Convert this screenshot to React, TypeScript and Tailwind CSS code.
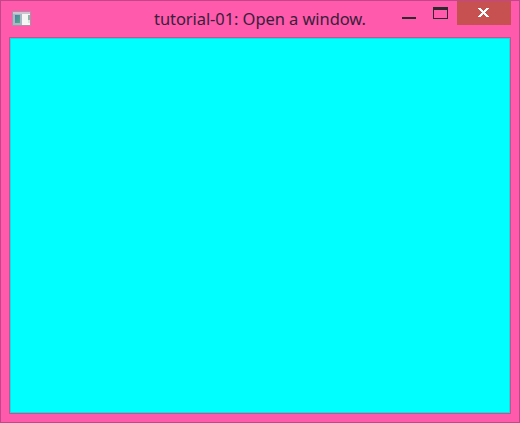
function AppIcon() {
  return (
    <svg className="mt-[10px] ml-[11px] h-[15px] w-[19px] shrink-0" viewBox="0 0 19 15" shapeRendering="crispEdges">
      <defs>
        <linearGradient id="pane" x1="0" y1="0" x2="1" y2="1">
          <stop offset="0" stopColor="#4a7fae" />
          <stop offset="1" stopColor="#51ae82" />
        </linearGradient>
      </defs>
      <rect width="19" height="15" fill="#b38ca8" />
      <rect x="1" y="1" width="17" height="2" fill="#cbc5cf" />
      <rect x="1" y="3" width="17" height="11" fill="#f5f5f5" />
      <rect x="1" y="3" width="9" height="11" fill="#a9b8c5" />
      <rect x="3" y="4" width="5" height="8" fill="url(#pane)" />
      <rect x="16" y="4" width="2" height="5" fill="#8fb5a9" />
      <rect x="16" y="9" width="2" height="3" fill="#d6e6dc" />
    </svg>
  );
}

function Controls() {
  return (
    <div className="flex h-[24px] shrink-0">
      <button aria-label="Minimize" className="flex w-[32px] items-start pt-[16px] pl-[8px]">
        <span className="h-[2px] w-[14px] bg-[#2b2a2c]" />
      </button>
      <button aria-label="Maximize" className="flex w-[31px] items-start pt-[6px] pl-[7px]">
        <span className="h-[12px] w-[15px] border border-t-3 border-[#2b2a2c]" />
      </button>
      <button aria-label="Close" className="flex w-[54px] items-start bg-[#c75050] pt-[7px] pl-[21px]">
        <svg className="h-[9px] w-[11px]" viewBox="0 0 11 9" shapeRendering="crispEdges">
          <path
            fill="#fff"
            d="M0 0h3v1h1v1h1v1h1v-1h1v-1h1v-1h3v1h-1v1h-1v1h-1v1h-1v1h1v1h1v1h1v1h1v1h-3v-1h-1v-1h-1v-1h-1v1h-1v1h-1v1h-3v-1h1v-1h1v-1h1v-1h1v-1h-1v-1h-1v-1h-1v-1h-1z"
          />
        </svg>
      </button>
    </div>
  );
}

export default function App() {
  return (
    <div className="flex h-[423px] w-[520px] flex-col border border-[#c3468a] bg-[#ff5aac]">
      <header className="flex h-[36px] shrink-0">
        <AppIcon />
        <h1 className="ml-[123px] w-[240px] shrink-0 pt-[6px] font-['Noto_Sans','Open_Sans',sans-serif] text-[16.5px] leading-[24px] tracking-[-0.075px] whitespace-nowrap text-[#38203a]">
          tutorial-01: Open a window.
        </h1>
        <Controls />
      </header>
      <main className="mr-[8px] mb-[8px] ml-[8px] flex-1 border border-[#c2548f] bg-[#00ffff] outline -outline-offset-2 outline-[#14dce0]" />
    </div>
  );
}
